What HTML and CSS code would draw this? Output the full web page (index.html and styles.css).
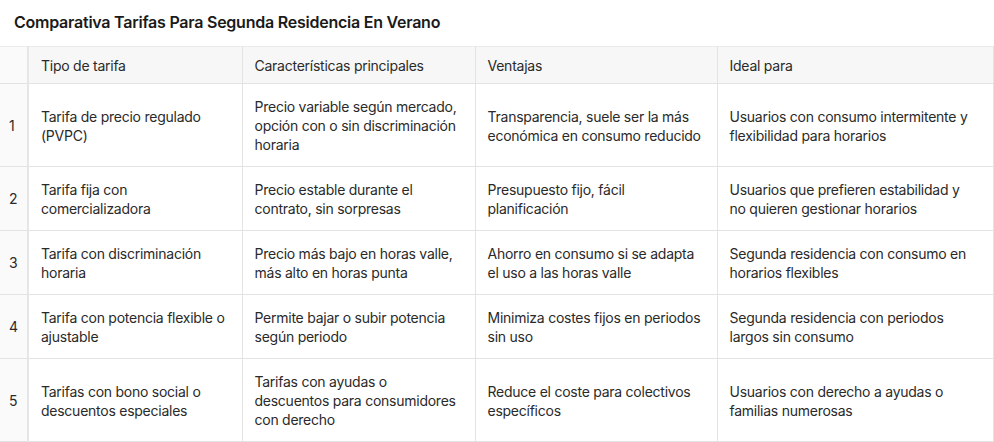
FILE: index.html
```html
<!DOCTYPE html>
<html lang="es">
<head>
<meta charset="utf-8">
<link rel="stylesheet" href="styles.css">
</head>
<body>
<h1 class="title">Comparativa Tarifas Para Segunda Residencia En Verano</h1>
<table class="grid">
  <colgroup>
    <col class="c-idx"><col class="c1"><col class="c2"><col class="c3"><col class="c4">
  </colgroup>
  <thead>
    <tr>
      <th class="idx"></th>
      <th>Tipo de tarifa</th>
      <th>Características principales</th>
      <th>Ventajas</th>
      <th class="last">Ideal para</th>
    </tr>
  </thead>
  <tbody>
    <tr>
      <td class="idx">1</td>
      <td>Tarifa de precio regulado (PVPC)</td>
      <td>Precio variable según mercado, opción con o sin discriminación horaria</td>
      <td>Transparencia, suele ser la más económica en consumo reducido</td>
      <td class="last">Usuarios con consumo intermitente y flexibilidad para horarios</td>
    </tr>
    <tr>
      <td class="idx">2</td>
      <td>Tarifa fija con comercializadora</td>
      <td>Precio estable durante el contrato, sin sorpresas</td>
      <td>Presupuesto fijo, fácil planificación</td>
      <td class="last">Usuarios que prefieren estabilidad y no quieren gestionar horarios</td>
    </tr>
    <tr>
      <td class="idx">3</td>
      <td>Tarifa con discriminación horaria</td>
      <td>Precio más bajo en horas valle, más alto en horas punta</td>
      <td>Ahorro en consumo si se adapta el uso a las horas valle</td>
      <td class="last">Segunda residencia con consumo en horarios flexibles</td>
    </tr>
    <tr>
      <td class="idx">4</td>
      <td>Tarifa con potencia flexible o ajustable</td>
      <td>Permite bajar o subir potencia según periodo</td>
      <td>Minimiza costes fijos en periodos sin uso</td>
      <td class="last">Segunda residencia con periodos largos sin consumo</td>
    </tr>
    <tr>
      <td class="idx">5</td>
      <td>Tarifas con bono social o descuentos especiales</td>
      <td>Tarifas con ayudas o descuentos para consumidores con derecho</td>
      <td>Reduce el coste para colectivos específicos</td>
      <td class="last">Usuarios con derecho a ayudas o familias numerosas</td>
    </tr>
  </tbody>
</table>
</body>
</html>
```

FILE: styles.css
```css
html, body {
  margin: 0;
  padding: 0;
  background: #ffffff;
}
body {
  font-family: Inter, "Helvetica Neue", Arial, sans-serif;
  color: #222222;
  font-size: 14px;
  line-height: 19px;
}
.title {
  margin: 0;
  padding: 12px 14px 0 14px;
  height: 34px;
  box-sizing: border-box;
  font-size: 16px;
  line-height: 20px;
  font-weight: 600;
  color: #1a1a1a;
  letter-spacing: -0.24px;
}
.grid {
  border-collapse: collapse;
  table-layout: fixed;
  width: 993px;
  margin-top: 12px;
}
.c-idx { width: 28px; }
.c1 { width: 214px; }
.c2 { width: 233px; }
.c3 { width: 242px; }
.c4 { width: 276px; }
.grid th, .grid td {
  border: 1px solid #e3e3e3;
  text-align: left;
  vertical-align: middle;
  padding: 13px 12px 12px 12px;
  font-weight: 400;
  color: #2a2a2a;
  letter-spacing: -0.25px;
}
.grid th {
  background: #f7f7f7;
  padding-top: 9px;
  padding-bottom: 8px;
}
.grid .last {
  padding-right: 17px;
}
.grid tr:first-child th { border-top: 1px solid #ebebeb; }
.grid th:first-child, .grid td:first-child { border-left: none; }
.grid .idx {
  background: #fafafa;
  padding: 0 0 0 9px;
  border-right: 2px solid #e6e6e6;
}
```
